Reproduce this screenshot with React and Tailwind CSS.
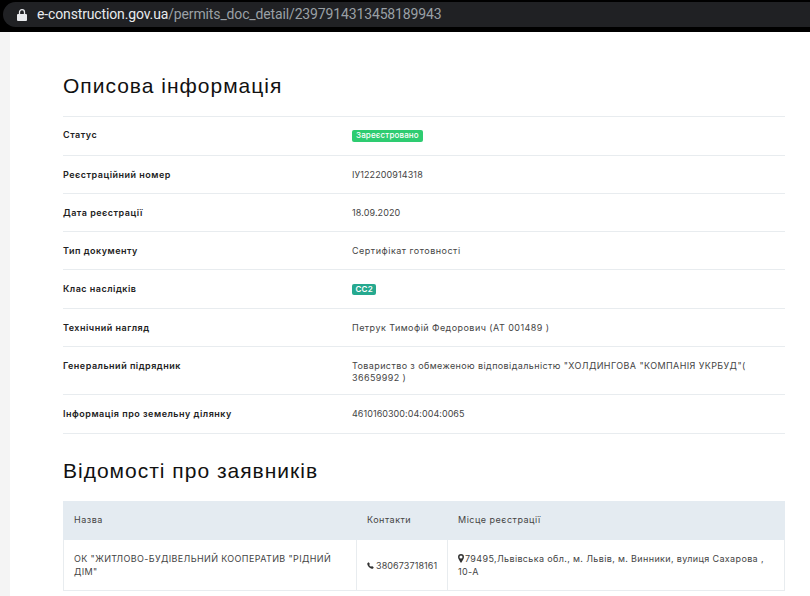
import React from "react";

const T = ({ children }) => <span className="tracking-[0.1px]">{children}</span>;

const rows = [
  ["Статус", <span className="inline-block bg-[#2ecc71] text-white rounded-[2px] px-[4px] h-[12px] leading-[11px] text-[8px] font-medium tracking-[0.15px]">Зареєстровано</span>, "h-[39px]", "pt-[12px]"],
  ["Реєстраційний номер", <T>ІУ122200914318</T>, "h-[38px]", "pt-[13px]"],
  ["Дата реєстрації", <T>18.09.2020</T>, "h-[38px]", "pt-[13px]"],
  ["Тип документу", "Сертифікат готовності", "h-[38px]", "pt-[13px]"],
  ["Клас наслідків", <span className="inline-block bg-[#26a98f] text-white rounded-[2px] px-[3.5px] h-[11px] leading-[11px] text-[8px] font-semibold tracking-[0.2px]">СС2</span>, "h-[39px]", "pt-[13px]"],
  ["Технічний нагляд", <span className="tracking-[0.45px]">Петрук Тимофій Федорович (АТ 001489 )</span>, "h-[38px]", "pt-[13px]"],
  ["Генеральний підрядник", <span className="tracking-[0.4px]">Товариство з обмеженою відповідальністю "ХОЛДИНГОВА "КОМПАНІЯ УКРБУД"( 36659992 )</span>, "h-[48px]", "pt-[13px]"],
  ["Інформація про земельну ділянку", <span className="tracking-[0.05px]">4610160300:04:004:0065</span>, "h-[39px]", "pt-[13px]"],
];

export default function App() {
  return (
    <div className="w-[810px] h-[596px] overflow-hidden bg-[#f4f4f4] flex flex-col font-['Inter',sans-serif] text-[#333] tracking-[0.5px]">
      <div className="h-[32px] bg-black shrink-0 pl-[3px] pt-[2px]">
        <div className="h-[25px] bg-[#202124] rounded-l-[13px] flex items-center pl-[14px] font-['Roboto',sans-serif] text-[14px] tracking-[-0.14px]">
          <svg width="10" height="12" viewBox="0 0 10 12" className="mr-[10px] shrink-0">
            <path d="M1 5h8a1 1 0 0 1 1 1v5a1 1 0 0 1-1 1H1a1 1 0 0 1-1-1V6a1 1 0 0 1 1-1z" fill="#e8eaed" />
            <path d="M2.5 5V3.2a2.5 2.5 0 0 1 5 0V5" fill="none" stroke="#e8eaed" strokeWidth="1.3" />
          </svg>
          <span className="text-[#e8eaed]">e-construction.gov.ua</span>
          <span className="text-[#9aa0a6]">/permits_doc_detail/2397914313458189943</span>
        </div>
      </div>
      <div className="ml-[10px] flex-1 bg-white pl-[53px] pr-[25px] min-h-0">
        <h2 className="font-['Liberation_Sans',sans-serif] text-[21px] leading-[24px] tracking-[1px] text-[#111] pt-[42px] h-[84px] box-border">Описова інформація</h2>
        <div className="border-t border-[#e8ecef]">
          {rows.map(([k, v, h, p], i) => (
            <div key={i} className={`flex border-b border-[#e8ecef] text-[9px] leading-[12px] box-border ${h}`}>
              <div className={`w-[289px] shrink-0 font-semibold text-[#222] ${p}`}>{k}</div>
              <div className={`flex-1 text-[#444] ${p}`}>{v}</div>
            </div>
          ))}
        </div>
        <h2 className="font-['Liberation_Sans',sans-serif] text-[21px] leading-[24px] tracking-[1px] text-[#111] pt-[25px] h-[67px] box-border">Відомості про заявників</h2>
        <div className="border border-t-0 border-[#e8ecef] text-[9px] leading-[13px] text-[#444]">
          <div className="flex bg-[#e4ebf1] h-[39px] items-center -mx-px pb-[2px]">
            <div className="w-[293px] pl-[11px]">Назва</div>
            <div className="w-[91px] pl-[11px]">Контакти</div>
            <div className="flex-1 pl-[11px]">Місце реєстрації</div>
          </div>
          <div className="flex h-[50px]">
            <div className="w-[292px] pl-[10px] pr-[4px] flex items-center tracking-[0.38px]">ОК "ЖИТЛОВО-БУДІВЕЛЬНИЙ КООПЕРАТИВ "РІДНИЙ ДІМ"</div>
            <div className="w-[91px] pl-[10px] border-l border-[#e8ecef] flex items-center gap-[2px] tracking-[0.1px]">
              <svg width="7" height="7" viewBox="0 0 24 24" className="shrink-0">
                <path d="M6 1l4 6-2.5 3c1.5 3 3.5 5 6.5 6.5L17 14l6 4-2 4c-1 1-3 1.500-5 1C8 21 3 15 1 8 .5 6 1 4 2 3z" fill="#333" />
              </svg>
              380673718161
            </div>
            <div className="flex-1 pl-[10px] pr-[4px] border-l border-[#e8ecef] flex items-center tracking-[0.36px]">
              <span>
                <svg width="6" height="9" viewBox="0 0 12 18" className="inline mr-[1px] align-[-1px]">
                  <path fillRule="evenodd" d="M6 0a6 6 0 0 1 6 6c0 3.500-4 9-6 12C4 15 0 9.500 0 6a6 6 0 0 1 6-6zm0 3a3 3 0 1 0 0 6 3 3 0 0 0 0-6z" fill="#333" />
                </svg>
                79495,Львівська обл., м. Львів, м. Винники, вулиця Сахарова , 10-А
              </span>
            </div>
          </div>
        </div>
      </div>
    </div>
  );
}
